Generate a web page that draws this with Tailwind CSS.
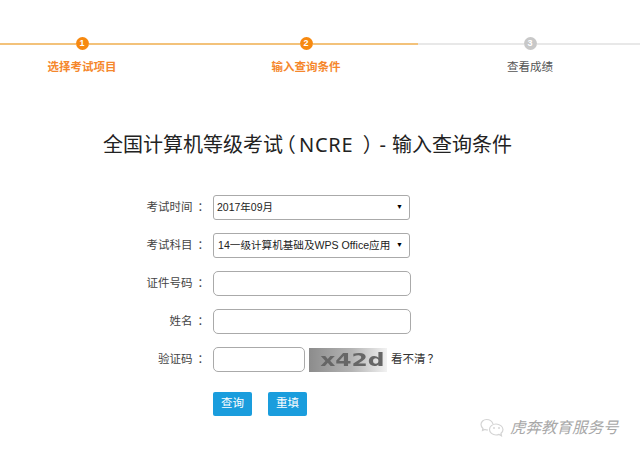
<!DOCTYPE html>
<html lang="zh-CN">
<head>
  <meta charset="UTF-8" />
  <meta name="viewport" content="width=device-width, initial-scale=1.0"/>
  <title>全国计算机等级考试（NCRE）- 输入查询条件</title>
  <script src="https://cdn.jsdelivr.net/npm/@tailwindcss/browser@4"></script>
</head>
<body class="bg-white overflow-hidden font-['Liberation_Sans','Noto_Sans_CJK_SC',sans-serif] text-[#333]">
  <div class="relative w-[640px] h-[455px] overflow-hidden">
    <!-- steps -->
    <div class="flex w-[672px] ml-[-30px] pt-[37px]">
      <div class="w-[224px] flex flex-col items-center">
        <div class="w-full h-[13px] flex items-center">
          <i class="flex-1 h-[2px] bg-[#f3c27a]"></i>
          <span class="w-[13px] h-[13px] rounded-full bg-[#f7890f] text-white text-[9px] font-bold leading-[13px] text-center">1</span>
          <i class="flex-1 h-[2px] bg-[#f3c27a]"></i>
        </div>
        <p class="mt-[10px] text-[11.5px] leading-[14px] font-bold text-[#f5872c]">选择考试项目</p>
      </div>
      <div class="w-[224px] flex flex-col items-center">
        <div class="w-full h-[13px] flex items-center">
          <i class="flex-1 h-[2px] bg-[#f3c27a]"></i>
          <span class="w-[13px] h-[13px] rounded-full bg-[#f7890f] text-white text-[9px] font-bold leading-[13px] text-center">2</span>
          <i class="flex-1 h-[2px] bg-[#f3c27a]"></i>
        </div>
        <p class="mt-[10px] text-[11.5px] leading-[14px] font-bold text-[#f5872c]">输入查询条件</p>
      </div>
      <div class="w-[224px] flex flex-col items-center">
        <div class="w-full h-[13px] flex items-center">
          <i class="flex-1 h-[2px] bg-[#e8e8e8]"></i>
          <span class="w-[13px] h-[13px] rounded-full bg-[#c8c8c8] text-white text-[9px] font-bold leading-[13px] text-center">3</span>
          <i class="flex-1 h-[2px] bg-[#e8e8e8]"></i>
        </div>
        <p class="mt-[10px] text-[11.5px] leading-[14px] text-[#555]">查看成绩</p>
      </div>
    </div>

    <h1 class="mt-[57px] ml-[103px] text-[20px] leading-[28px] text-[#222] font-['Noto_Sans','Noto_Sans_CJK_SC',sans-serif] whitespace-nowrap">全国计算机等级考试<span class="ml-[2px] mr-[4px] [font-feature-settings:'palt']">（</span><span class="tracking-[0.75px]">NCRE</span><span class="ml-[10px] mr-[6px] [font-feature-settings:'palt']">）</span>- <span class="ml-[1px]">输入查询条件</span></h1>

    <!-- form -->
    <form class="mt-[36px] flex flex-col gap-[13px] text-[11.5px]">
      <div class="flex items-center h-[25px]">
        <label class="w-[209px] text-right text-[#444] shrink-0">考试时间<span class="ml-[5px]">：</span></label>
        <div class="ml-[4px] w-[197px] h-[25px] border border-[#aaa] rounded-[3px] flex items-center justify-between pl-[3px] pr-[6px] text-[#222] text-[10.5px]">
          <span>2017年09月</span><span class="text-[7px] text-black">▼</span>
        </div>
      </div>
      <div class="flex items-center h-[25px]">
        <label class="w-[209px] text-right text-[#444] shrink-0">考试科目<span class="ml-[5px]">：</span></label>
        <div class="ml-[4px] w-[197px] h-[25px] border border-[#aaa] rounded-[3px] flex items-center justify-between pl-[4px] pr-[6px] text-[#222] text-[10.6px] whitespace-nowrap">
          <span>14一级计算机基础及WPS Office应用</span><span class="text-[7px] text-black">▼</span>
        </div>
      </div>
      <div class="flex items-center h-[25px]">
        <label class="w-[209px] text-right text-[#444] shrink-0">证件号码<span class="ml-[5px]">：</span></label>
        <input type="text" class="ml-[4px] w-[198px] h-[25px] border border-[#aaa] rounded-[5px]">
      </div>
      <div class="flex items-center h-[25px]">
        <label class="w-[209px] text-right text-[#444] shrink-0">姓名<span class="ml-[5px]">：</span></label>
        <input type="text" class="ml-[4px] w-[198px] h-[25px] border border-[#aaa] rounded-[5px]">
      </div>
      <div class="flex items-center h-[25px]">
        <label class="w-[209px] text-right text-[#444] shrink-0">验证码<span class="ml-[5px]">：</span></label>
        <input type="text" class="ml-[4px] w-[92px] h-[25px] border border-[#aaa] rounded-[5px]">
        <div class="ml-[4px] w-[78px] h-[24px] bg-[linear-gradient(90deg,#8c8c8c,#b4b4b4_55%,#f2f2f2)] text-[#666] text-[18px] font-bold leading-[24px] text-right pr-[2px] font-['DejaVu_Sans',sans-serif] overflow-hidden"><span class="inline-block origin-right scale-x-[1.3] blur-[0.5px]">x42d</span></div>
        <a class="ml-[4px] text-[#333] whitespace-nowrap">看不清<span class="ml-[2px]">？</span></a>
      </div>
      <div class="flex ml-[213px] mt-[7px] gap-[16px]">
        <button type="button" class="w-[39px] h-[24px] bg-[#1a9ddd] text-white rounded-[2px]">查询</button>
        <button type="button" class="w-[39px] h-[24px] bg-[#1a9ddd] text-white rounded-[2px]">重填</button>
      </div>
    </form>

    <!-- watermark -->
    <div class="absolute left-[480px] top-[418px] flex items-center gap-[4px] text-[#a8a8a8]">
      <svg width="26" height="20" viewBox="0 0 26 20" fill="none" stroke="#d4d4d4" stroke-width="1.2">
        <path d="M13 6C12 3 9 1.500 6.500 1.500C3.500 1.500 1 4 1 6.500C1 8.500 2 9.500 3 10.500L2.500 12.500L5 11.500C6 12 7 12 8 12"/>
        <path d="M16 6C12.500 6 9.500 8.500 9.500 11.500C9.500 14.500 12.500 17 16 17C17 17 18 16.800 19 16.400L21.500 17.800L21 15.300C22.500 14.200 23 13 23 11.500C23 8.500 19.500 6 16 6Z"/>
        <circle cx="14" cy="10" r=".8" fill="#bbb" stroke="none"/>
        <circle cx="19" cy="10" r=".8" fill="#bbb" stroke="none"/>
      </svg>
      <span class="italic text-[15.5px] leading-[20px] whitespace-nowrap">虎奔教育服务号</span>
    </div>
  </div>
</body>
</html>
